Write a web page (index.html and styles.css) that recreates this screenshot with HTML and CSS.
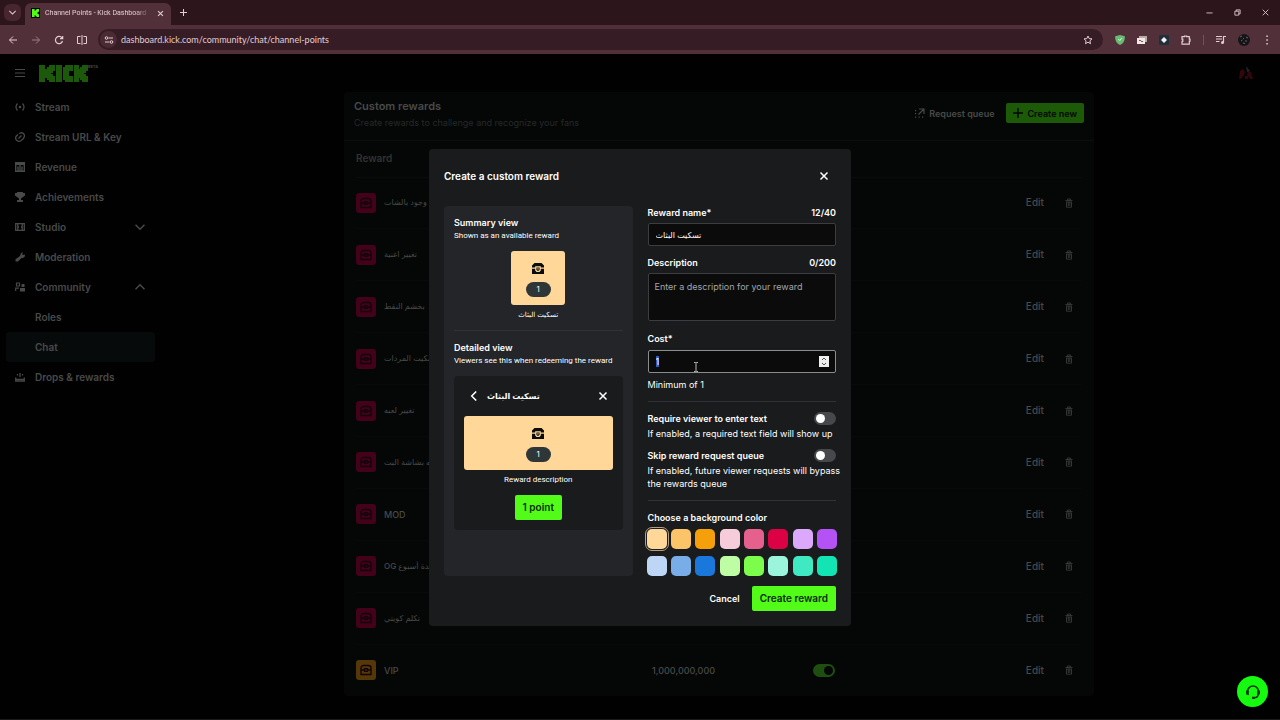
FILE: index.html
```html
<!DOCTYPE html>
<html lang="en">
    <head>
        <meta charset="UTF-8" />
        <meta name="viewport" content="width=device-width, initial-scale=1.0" />
        <title>Channel Points - Kick Dashboard</title>
        <link rel="stylesheet" href="styles.css">
    </head>
    <body>
        <!-- Shared icons -->
        <svg class="sprite" aria-hidden="true">
            <symbol id="chest" viewBox="0 0 12 11">
                <path fill="currentColor" fill-rule="evenodd" d="M2.500 0h7L12 2.500V4.500H8.800V3.300H3.200v1.200H0V2.500zM0 5.700h3.200v1.800L4.600 9h2.800l1.400-1.500V5.700H12V11H0zM4.400 4.400h3.200v2.400L6.800 7.800H5.200l-.8-1zM5.400 5.300v1.300h1.200V5.300z" />
            </symbol>
            <symbol id="chest-dim" viewBox="0 0 12 12">
                <path fill="none" stroke="currentColor" stroke-width="1.400" d="M1 10.500V4a2.500 2.500 0 0 1 2.500-2.500h5A2.500 2.500 0 0 1 11 4v6.500zM1 6h3.500M7.500 6H11M4.600 4.800h2.800v2.600H4.600z" />
            </symbol>
            <symbol id="trash" viewBox="0 0 10 10">
                <path fill="none" stroke="currentColor" d="M1.500 2.500h7M3.500 2V1h3v1M2.500 4v5.200h5V4M4.300 4v4M5.800 4v4M2 4h6" />
            </symbol>
            <symbol id="close" viewBox="0 0 10 10">
                <path fill="none" stroke="currentColor" stroke-width="1.500" d="M1.500 1.500l7 7M8.500 1.500l-7 7" />
            </symbol>
            <symbol id="chevron" viewBox="0 0 10 10">
                <path fill="none" stroke="currentColor" stroke-width="1.500" d="M0.500 2.800L5 7.300l4.500-4.500" />
            </symbol>
            <symbol id="kick-k" viewBox="0 0 8 9">
                <path fill="currentColor" d="M0 0h3v2h1V1h1V0h3v3H7v1H6v1h1v1h1v3H5V8H4V7H3v2H0z" />
            </symbol>
        </svg>

        <header class="browser">
            <div class="tab-strip">
                <button class="tab-search" aria-label="Search tabs">
                    <svg class="icon-small"><use href="#chevron" /></svg>
                </button>
                <div class="tab">
                    <span class="favicon"><svg viewBox="0 0 8 9"><use href="#kick-k" /></svg></span>
                    <span class="tab-title">Channel Points - Kick Dashboard</span>
                    <button aria-label="Close tab"><svg class="icon-small"><use href="#close" /></svg></button>
                </div>
                <button class="new-tab" aria-label="New tab">
                    <svg class="icon-small" viewBox="0 0 10 10"><path fill="none" stroke="currentColor" stroke-width="1.500" d="M5 0v10M0 5h10" /></svg>
                </button>
                <div class="window-buttons">
                    <button aria-label="Minimize"><svg class="icon-small" viewBox="0 0 8 8"><path fill="none" stroke="currentColor" d="M0.500 4.500h7" /></svg></button>
                    <button aria-label="Restore"><svg class="icon-small" viewBox="0 0 8 8"><path fill="none" stroke="currentColor" d="M1 2.500h4.500V7H1zM2.500 2.500V1H7v4.500H5.500" /></svg></button>
                    <button aria-label="Close window"><svg class="icon-small" viewBox="0 0 8 8"><path fill="none" stroke="currentColor" d="M0.800 0.800l6.400 6.400M7.200 0.800L0.800 7.200" /></svg></button>
                </div>
            </div>
            <div class="toolbar">
                <div class="nav-buttons">
                    <button aria-label="Back"><svg class="icon" viewBox="0 0 10 10"><path fill="none" stroke="currentColor" d="M9 5H1.500M5 1.500L1.500 5 5 8.500" /></svg></button>
                    <button class="disabled" aria-label="Forward"><svg class="icon" viewBox="0 0 10 10"><path fill="none" stroke="currentColor" d="M1 5h7.500M5 1.500L8.500 5 5 8.500" /></svg></button>
                    <button aria-label="Reload"><svg class="icon" viewBox="0 0 10 10"><path fill="none" stroke="currentColor" stroke-width="1.200" d="M8.500 6A3.600 3.600 0 1 1 8 3M8.700 1v2.700H6" /></svg></button>
                    <button aria-label="Split view"><svg class="icon" viewBox="0 0 10 10"><path fill="none" stroke="currentColor" d="M3.500 1.500h-3v7h3M5 0v10M6.500 1.500h3v7h-3" /></svg></button>
                </div>
                <div class="address">
                    <span class="site-info"><svg class="icon" viewBox="0 0 10 10"><path fill="none" stroke="currentColor" stroke-width="1.200" d="M4.500 3H9M1 7h4.500" /><circle cx="2.500" cy="3" r="1.300" fill="none" stroke="currentColor" /><circle cx="7.500" cy="7" r="1.300" fill="none" stroke="currentColor" /></svg></span>
                    <input type="text" aria-label="Address" value="dashboard.kick.com/community/chat/channel-points" />
                    <button aria-label="Bookmark"><svg class="icon" viewBox="0 0 10 10"><path fill="none" stroke="currentColor" d="M5 1l1.200 2.600 2.800.3L6.900 5.800l.6 2.900L5 7.200 2.500 8.700l.6-2.900L1 3.900l2.800-.3z" /></svg></button>
                </div>
                <div class="extensions">
                    <svg class="icon" viewBox="0 0 10 10"><path fill="#68bc71" d="M5 0l4.800 1.200c.2 4-1 7-4.800 8.800C1.200 8.200 0 5.200.2 1.200z" /><path fill="none" stroke="#e6f5e8" d="M3.300 4l1.500 1.500 2-2.500" /></svg>
                    <svg class="icon" viewBox="0 0 10 10"><path fill="#b8aaa8" d="M2 1h8v6H2z" /><path fill="#f0ebe8" d="M0 3h8v6H0z" /><path fill="#b8443c" d="M2 5h2v1H2zM4 6h2v1H4z" /></svg>
                    <svg class="icon" viewBox="0 0 10 10"><path fill="#20303a" d="M0 0h10v10H0z" /><path fill="#f4f4f4" d="M5 2l3 3-3 3-3-3z" /></svg>
                    <svg class="icon" viewBox="0 0 10 10"><path fill="none" stroke="currentColor" stroke-width="1.200" d="M1 1.700h2.600V1h2v.7H8.300v2.500H9v2h-.7v2.900H1V6.400h.8V4.200H1z" /></svg>
                    <span class="divider"></span>
                    <svg class="icon" viewBox="0 0 10 10"><path fill="none" stroke="currentColor" stroke-width="1.200" d="M0 1.500h6M0 4h6M0 6.500h3.500M7.500 7.500v-6H10" /><circle cx="6.500" cy="7.500" r="1.500" fill="currentColor" /></svg>
                    <svg class="profile" viewBox="0 0 12 12"><circle cx="6" cy="6" r="6" fill="#151517" /><path fill="none" stroke="#686268" d="M2 3l2-1M8 3l2 1M3 7l1.500-1M7 7h2M5 9l2 .5M5 4l1 1" /></svg>
                    <svg class="icon" viewBox="0 0 10 10"><path fill="currentColor" d="M4.300.5h1.500V2H4.300zM4.300 4.200h1.500v1.500H4.300zM4.300 8h1.500v1.500H4.300z" /></svg>
                </div>
            </div>
        </header>

        <div class="page">
            <div class="topbar">
                <button aria-label="Menu"><svg class="icon" viewBox="0 0 10 10"><path fill="none" stroke="currentColor" d="M0 1.500h10M0 5h10M0 8.500h10" /></svg></button>
                <a class="logo" href="#" aria-label="Kick">
                    <svg viewBox="0 0 49 17">
                        <path fill="currentColor" d="M0 0h6v4h2V2h2V0h6v6h-2v2h-2v1h2v2h2v6h-6v-2H8v-2H6v4H0zM17 0h6v17h-6zM26 0h8v6h-4v5h4v6h-8v-2h-2V2h2zM35 0h5v4h1V2h2V0h6v6h-2v2h-2v1h2v2h2v6h-6v-2h-2v-2h-1v4h-5z" />
                    </svg>
                </a>
                <span class="beta">BETA</span>
                <svg class="avatar" viewBox="0 0 16 16"><path fill="#32060d" d="M2 6l3-2 2 3-1 3-3 4H1zM10 6l3 1 2 7h-3l-3-4zM7 11h3v3H7z" /><path fill="#252525" d="M8 1l4 5-3 1z" /></svg>
            </div>

            <nav class="sidebar">
                <a href="#"><svg class="icon" viewBox="0 0 10 10"><path fill="none" stroke="currentColor" stroke-width="1.200" d="M2.500 1.500Q-.5 5 2.500 8.500M7.500 1.500q3 3.500 0 7" /><circle cx="5" cy="5" r="1.300" fill="currentColor" /></svg>Stream</a>
                <a href="#"><svg class="icon" viewBox="0 0 10 10"><path fill="none" stroke="currentColor" stroke-width="1.300" d="M4 1.500L6 .8a3 3 0 0 1 3 4.500L8 7 5.500 9a3.400 3.400 0 0 1-4.500-4.500L3 2.500M3.500 6.500l3-3" /></svg>Stream URL &amp; Key</a>
                <a href="#"><svg class="icon" viewBox="0 0 10 10"><path fill="none" stroke="currentColor" stroke-width="1.400" d="M.7.700h8.600v8.600H.7zM3 9V4.500M5 9V3M7 9V4.500M1 2.200h8" /></svg>Revenue</a>
                <a href="#"><svg class="icon" viewBox="0 0 10 10"><path fill="currentColor" d="M2 0h6v1h2v2.500L8 5 6 6.500V8h2v2H2V8h2V6.500L2 5 0 3.500V1h2z" /></svg>Achievements</a>
                <a href="#"><svg class="icon" viewBox="0 0 10 10"><path fill="none" stroke="currentColor" stroke-width="1.300" d="M.7 1.700h8.600v6.600H.7zM2.800 2v6M7.200 2v6M2.800 5h1.200M6 5h1.200" /></svg>Studio<svg class="icon arrow"><use href="#chevron" /></svg></a>
                <a href="#"><svg class="icon" viewBox="0 0 10 10"><path fill="currentColor" d="M6 1l2-.7-.8 2 .8.8 2-.6c0 3-1.500 3.800-3.500 3.500L3 9.500H.5V7.200L5 4z" /></svg>Moderation</a>
                <a href="#"><svg class="icon" viewBox="0 0 10 10"><path fill="none" stroke="currentColor" stroke-width="1.200" d="M1.500 1h3v3h-3zM.7 9V6.200H4" /><path fill="currentColor" d="M6.500 2h3v3h-3zM5 6h5v3.500H5z" /></svg>Community<svg class="icon arrow up"><use href="#chevron" /></svg></a>
                <a class="child" href="#">Roles</a>
                <a class="child active" href="#">Chat</a>
                <a href="#"><svg class="icon" viewBox="0 0 10 10"><path fill="none" stroke="currentColor" stroke-width="1.300" d="M5 1v4M2.500 2v1.500M7.500 2v1.500M.7 5.500v3.600h8.600V5.500M1 7.500h8" /></svg>Drops &amp; rewards</a>
            </nav>

            <main class="content">
                <section class="card">
                    <div class="card-header">
                        <div>
                            <h1>Custom rewards</h1>
                            <p>Create rewards to challenge and recognize your fans</p>
                        </div>
                        <button class="request-queue"><svg class="icon" viewBox="0 0 10 10"><path fill="none" stroke="currentColor" stroke-width="1.200" d="M4 1h5v5M9 1L3.500 6.500" /><path fill="currentColor" d="M0 2h1.200v1.200H0zM0 5h1.200v1.200H0zM0 8.500h1.200v1.200H0zM3.500 8.500h1.200v1.200H3.500zM7 8.500h1.200v1.200H7z" /></svg>Request queue</button>
                        <button class="create-new"><svg class="icon" viewBox="0 0 10 10"><path fill="none" stroke="currentColor" stroke-width="1.400" d="M5 0v10M0 5h10" /></svg>Create new</button>
                    </div>
                    <table>
                        <thead>
                            <tr><th class="col-reward">Reward</th><th class="col-cost"></th><th></th><th class="col-actions"></th></tr>
                        </thead>
                        <tbody>
                            <tr>
                                <td><div class="reward"><span class="badge"><svg><use href="#chest-dim" /></svg></span>اثبات وجود بالشات</div></td><td></td><td></td>
                                <td><div class="actions"><button>Edit</button><button aria-label="Delete"><svg class="icon"><use href="#trash" /></svg></button></div></td>
                            </tr>
                            <tr>
                                <td><div class="reward"><span class="badge"><svg><use href="#chest-dim" /></svg></span>تغيير اغنية</div></td><td></td><td></td>
                                <td><div class="actions"><button>Edit</button><button aria-label="Delete"><svg class="icon"><use href="#trash" /></svg></button></div></td>
                            </tr>
                            <tr>
                                <td><div class="reward"><span class="badge"><svg><use href="#chest-dim" /></svg></span>بخشم النقط</div></td><td></td><td></td>
                                <td><div class="actions"><button>Edit</button><button aria-label="Delete"><svg class="icon"><use href="#trash" /></svg></button></div></td>
                            </tr>
                            <tr>
                                <td><div class="reward"><span class="badge"><svg><use href="#chest-dim" /></svg></span>تسكيت المردات</div></td><td></td><td></td>
                                <td><div class="actions"><button>Edit</button><button aria-label="Delete"><svg class="icon"><use href="#trash" /></svg></button></div></td>
                            </tr>
                            <tr>
                                <td><div class="reward"><span class="badge"><svg><use href="#chest-dim" /></svg></span>تغيير لعبه</div></td><td></td><td></td>
                                <td><div class="actions"><button>Edit</button><button aria-label="Delete"><svg class="icon"><use href="#trash" /></svg></button></div></td>
                            </tr>
                            <tr>
                                <td><div class="reward"><span class="badge"><svg><use href="#chest-dim" /></svg></span>لحظه بشاشة البث</div></td><td></td><td></td>
                                <td><div class="actions"><button>Edit</button><button aria-label="Delete"><svg class="icon"><use href="#trash" /></svg></button></div></td>
                            </tr>
                            <tr>
                                <td><div class="reward latin"><span class="badge"><svg><use href="#chest-dim" /></svg></span>MOD</div></td><td></td><td></td>
                                <td><div class="actions"><button>Edit</button><button aria-label="Delete"><svg class="icon"><use href="#trash" /></svg></button></div></td>
                            </tr>
                            <tr>
                                <td><div class="reward"><span class="badge"><svg><use href="#chest-dim" /></svg></span>OG لمدة أسبوع</div></td><td></td><td></td>
                                <td><div class="actions"><button>Edit</button><button aria-label="Delete"><svg class="icon"><use href="#trash" /></svg></button></div></td>
                            </tr>
                            <tr>
                                <td><div class="reward"><span class="badge"><svg><use href="#chest-dim" /></svg></span>تكلم كويتي</div></td><td></td><td></td>
                                <td><div class="actions"><button>Edit</button><button aria-label="Delete"><svg class="icon"><use href="#trash" /></svg></button></div></td>
                            </tr>
                            <tr>
                                <td><div class="reward latin"><span class="badge gold"><svg><use href="#chest-dim" /></svg></span>VIP</div></td>
                                <td class="amount">1,000,000,000</td>
                                <td><input class="toggle dim" type="checkbox" aria-label="VIP enabled" checked /></td>
                                <td><div class="actions"><button>Edit</button><button aria-label="Delete"><svg class="icon"><use href="#trash" /></svg></button></div></td>
                            </tr>
                        </tbody>
                    </table>
                </section>
            </main>

            <div class="overlay">
                <form class="modal">
                    <div class="modal-header">
                        <h2>Create a custom reward</h2>
                        <button type="button" aria-label="Close"><svg class="icon"><use href="#close" /></svg></button>
                    </div>
                    <div class="modal-body">
                        <div class="preview">
                            <h3>Summary view</h3>
                            <p>Shown as an available reward</p>
                            <div class="tile summary-tile">
                                <svg class="chest"><use href="#chest" /></svg>
                                <span class="pill">1</span>
                            </div>
                            <div class="tile-name">تسكيت البثاث</div>
                            <hr />
                            <h3>Detailed view</h3>
                            <p>Viewers see this when redeeming the reward</p>
                            <div class="detail">
                                <div class="detail-header">
                                    <button type="button" aria-label="Back"><svg class="icon back"><use href="#chevron" /></svg></button>
                                    <strong>تسكيت البثاث</strong>
                                    <button type="button" aria-label="Close preview"><svg class="icon"><use href="#close" /></svg></button>
                                </div>
                                <div class="tile">
                                    <svg class="chest"><use href="#chest" /></svg>
                                    <span class="pill">1</span>
                                </div>
                                <div class="detail-text">Reward description</div>
                                <button type="button" class="primary">1 point</button>
                            </div>
                        </div>

                        <div class="fields">
                            <div class="label-row"><label for="rewardName">Reward name*</label><span>12/40</span></div>
                            <input class="field arabic" type="text" id="rewardName" value="تسكيت البثاث" />
                            <div class="label-row"><label for="description">Description</label><span>0/200</span></div>
                            <textarea class="field" id="description" placeholder="Enter a description for your reward"></textarea>
                            <div class="label-row"><label for="cost">Cost*</label></div>
                            <div class="cost">
                                <input class="field" type="number" id="cost" min="1" value="1" autofocus />
                                <svg class="spinner" viewBox="0 0 10 11"><path fill="#efefef" d="M0 0h10v11H0z" /><path fill="none" stroke="#555" d="M3 4l2-2 2 2M3 7l2 2 2-2" /></svg>
                                <svg class="cursor" viewBox="0 0 6 10"><path fill="none" stroke="#bbb" d="M1 .5h1.500l.5.500.5-.5H5M3 1v8M1 9.500h1.500L3 9l.5.500H5" /></svg>
                            </div>
                            <p>Minimum of 1</p>
                            <hr />
                            <div class="switch-row">
                                <label for="requireText">Require viewer to enter text</label>
                                <input class="toggle" type="checkbox" id="requireText" />
                            </div>
                            <p>If enabled, a required text field will show up</p>
                            <div class="switch-row second">
                                <label for="skipQueue">Skip reward request queue</label>
                                <input class="toggle" type="checkbox" id="skipQueue" />
                            </div>
                            <p>If enabled, future viewer requests will bypass the rewards queue</p>
                            <hr />
                            <fieldset>
                                <legend>Choose a background color</legend>
                                <div class="swatches">
                                    <input type="radio" name="color" class="peach" aria-label="Peach" checked />
                                    <input type="radio" name="color" class="apricot" aria-label="Apricot" />
                                    <input type="radio" name="color" class="orange" aria-label="Orange" />
                                    <input type="radio" name="color" class="blush" aria-label="Blush" />
                                    <input type="radio" name="color" class="pink" aria-label="Pink" />
                                    <input type="radio" name="color" class="crimson" aria-label="Crimson" />
                                    <input type="radio" name="color" class="lilac" aria-label="Lilac" />
                                    <input type="radio" name="color" class="purple" aria-label="Purple" />
                                    <input type="radio" name="color" class="ice" aria-label="Ice" />
                                    <input type="radio" name="color" class="sky" aria-label="Sky" />
                                    <input type="radio" name="color" class="blue" aria-label="Blue" />
                                    <input type="radio" name="color" class="lime" aria-label="Lime" />
                                    <input type="radio" name="color" class="green" aria-label="Green" />
                                    <input type="radio" name="color" class="mint" aria-label="Mint" />
                                    <input type="radio" name="color" class="aqua" aria-label="Aqua" />
                                    <input type="radio" name="color" class="teal" aria-label="Teal" />
                                </div>
                            </fieldset>
                        </div>
                    </div>
                    <div class="modal-footer">
                        <button type="button" class="cancel">Cancel</button>
                        <button type="submit" class="primary">Create reward</button>
                    </div>
                </form>
            </div>

            <button class="support" aria-label="Support">
                <svg viewBox="0 0 16 16"><path fill="none" stroke="currentColor" stroke-width="1.500" d="M2.500 9V7.500a5.500 5.500 0 0 1 11 0V9c0 3-1.500 4.800-4.500 4.800" /><path fill="currentColor" d="M1 6.500h2.800v4.800C2 11.300 1 10.300 1 9zM15 6.500h-2.800v4.800c1.800 0 2.800-1 2.800-2.300zM7 12.800h3V15H7z" /></svg>
            </button>
        </div>

        <script>
            // Start with the cost highlighted so it can be typed over
            const cost = document.getElementById("cost");
            cost.focus();
            cost.select();
        </script>
    </body>
</html>
```

FILE: styles.css
```css
* {
    box-sizing: border-box;
}
body {
    display: flex;
    flex-direction: column;
    min-height: 100vh;
    margin: 0;
    background-color: #010101;
    color: #fff;
    font-family: Inter, "DejaVu Sans", sans-serif;
    font-size: 9px;
    line-height: 13px;
}
h1,
h2,
h3,
p {
    margin: 0;
}
button,
input,
textarea {
    font: inherit;
    color: inherit;
}
button {
    display: flex;
    align-items: center;
    justify-content: center;
    padding: 0;
    border: none;
    background: none;
    cursor: pointer;
}
a {
    color: inherit;
    text-decoration: none;
}
hr {
    height: 1px;
    margin: 0;
    border: none;
    background-color: #303235;
}
svg {
    display: block;
    flex: none;
}
.sprite {
    position: absolute;
    width: 0;
    height: 0;
}
.icon {
    width: 10px;
    height: 10px;
}
.icon-small {
    width: 7px;
    height: 7px;
}

/* Browser window */
.browser {
    color: #e3ccd2;
    font-family: Lato, sans-serif;
}
.tab-strip {
    display: flex;
    align-items: center;
    height: 25px;
    padding-left: 4px;
    background-color: #2d151c;
}
.tab-search {
    width: 17px;
    height: 17px;
    border-radius: 6px;
    background-color: #47262f;
}
.tab {
    display: flex;
    align-items: center;
    align-self: flex-end;
    width: 146px;
    height: 22px;
    margin-left: 4px;
    padding: 0 7px 2px 6px;
    border-radius: 6px 6px 0 0;
    background-color: #52303a;
}
.favicon {
    display: flex;
    align-items: center;
    justify-content: center;
    width: 9px;
    height: 10px;
    background-color: #000;
    color: #53fc18;
}
.favicon svg {
    width: 7px;
    height: 8px;
}
.tab-title {
    flex: 1;
    overflow: hidden;
    margin: 0 6px 0 5px;
    font-family: Roboto, sans-serif;
    font-size: 7px;
    white-space: nowrap;
    mask-image: linear-gradient(to right, #000 85%, transparent);
}
.new-tab {
    margin-left: 5px;
    padding: 4px;
}
.window-buttons {
    display: flex;
    gap: 21px;
    margin-left: auto;
    padding-right: 11px;
}
.toolbar {
    display: flex;
    align-items: center;
    height: 29px;
    background-color: #52303a;
}
.nav-buttons {
    display: flex;
    gap: 13px;
    padding: 0 11px 0 8px;
}
.disabled {
    opacity: 0.5;
}
.address {
    display: flex;
    flex: 1;
    align-items: center;
    height: 21px;
    padding: 0 10px 0 2px;
    border-radius: 11px;
    background-color: #361d25;
}
.site-info {
    display: flex;
    align-items: center;
    justify-content: center;
    width: 17px;
    height: 17px;
    border-radius: 9px;
    background-color: #4a2b34;
}
.address input {
    flex: 1;
    min-width: 0;
    margin-left: 3px;
    padding: 0 1px;
    border: none;
    outline: none;
    background: none;
}
.extensions {
    display: flex;
    align-items: center;
    gap: 12px;
    padding: 0 8px 0 12px;
}
.extensions .divider {
    width: 1px;
    height: 10px;
    background-color: #75505b;
}
.profile {
    width: 12px;
    height: 12px;
}

/* Dashboard */
.page {
    position: relative;
    display: grid;
    flex: 1;
    grid-template-columns: 158px 1fr;
    grid-template-rows: 38px 1fr;
    border-bottom: 1px solid #1a1a1a;
    color: #484a49;
}
.topbar {
    display: flex;
    grid-column: 1 / 3;
    align-items: center;
    padding: 0 26px 0 15px;
}
.logo {
    margin-left: 14px;
    color: #1d590b;
}
.logo svg {
    width: 49px;
    height: 17px;
}
.beta {
    align-self: flex-start;
    margin-top: 6px;
    font-size: 4px;
    font-weight: 600;
}
.avatar {
    width: 16px;
    height: 16px;
    margin-left: auto;
}
.sidebar a {
    display: flex;
    align-items: center;
    gap: 10px;
    height: 30px;
    margin: 0 3px 0 6px;
    padding: 0 10px 0 9px;
    border-radius: 3px;
    font-size: 10px;
    font-weight: 600;
}
.sidebar .child {
    padding-left: 29px;
}
.sidebar .active {
    background-color: #070a0a;
}
.arrow {
    margin-left: auto;
}
.up {
    transform: rotate(180deg);
}
.content {
    padding: 0 24px;
}
.card {
    max-width: 750px;
    margin: 0 auto;
    border-radius: 4px;
    background-color: #040706;
}
.card-header {
    display: flex;
    align-items: center;
    gap: 12px;
    height: 49px;
    padding: 0 10px 6px;
    border-bottom: 1px solid #0a0e0d;
}
.card-header div {
    margin-right: auto;
    padding-top: 2px;
}
.card-header h1 {
    font-size: 11px;
    font-weight: 600;
    line-height: 18px;
}
.card-header p {
    color: #262928;
    line-height: 16px;
}
.request-queue {
    gap: 4px;
    font-weight: 600;
}
.create-new {
    gap: 4px;
    height: 20px;
    padding: 0 7px;
    border-radius: 2px;
    background-color: #1c5a08;
    color: #020802;
    font-weight: 600;
}
.card table {
    width: calc(100% - 24px);
    height: 555px;
    margin: 0 12px;
    border-collapse: collapse;
    table-layout: fixed;
}
.card th {
    height: 36px;
    padding: 0;
    border-bottom: 1px solid #090c0b;
    color: #313433;
    font-size: 10px;
    font-weight: 600;
    text-align: left;
}
.card td {
    height: 51px;
    padding: 0;
    border-bottom: 1px solid #070a09;
    font-size: 10px;
    font-weight: 500;
}
.card .amount {
    font-size: 9px;
}
.card tr:last-child td {
    border-bottom: none;
}
.col-reward {
    width: 296px;
}
.col-cost {
    width: 161px;
}
.col-actions {
    width: 80px;
}
.reward {
    display: flex;
    align-items: center;
    gap: 8px;
    font-size: 8px;
    white-space: nowrap;
}
.reward.latin {
    font-size: 9px;
}
.badge {
    display: flex;
    align-items: center;
    justify-content: center;
    width: 20px;
    height: 20px;
    border-radius: 3px;
    background-color: #43021a;
    color: #14030a;
}
.badge svg {
    width: 14px;
    height: 12px;
}
.badge.gold {
    background-color: #553807;
}
.actions {
    display: flex;
    justify-content: flex-end;
    gap: 12px;
}
.actions button {
    padding: 5px 8px;
}
.actions button + button {
    padding: 5px 8px 5px 0;
    color: #343635;
}

/* Switches */
.toggle {
    display: flex;
    align-items: center;
    flex: none;
    width: 22px;
    height: 13px;
    margin: 0;
    padding: 0 2px;
    border-radius: 7px;
    background-color: #46484b;
    appearance: none;
}
.toggle::before {
    width: 9px;
    height: 9px;
    border-radius: 5px;
    background-color: #fff;
    content: "";
}
.toggle.dim {
    background-color: #1f4f10;
}
.toggle:checked::before {
    margin-left: auto;
}
.toggle.dim::before {
    background-color: #050706;
}

/* New reward dialog */
.overlay {
    position: absolute;
    inset: 0;
    display: flex;
    align-items: center;
    justify-content: center;
    padding-top: 2px;
}
.modal {
    width: 422px;
    padding: 15px;
    border-radius: 4px;
    background-color: #191b1c;
    color: #fff;
}
.modal-header {
    display: flex;
    align-items: center;
    justify-content: space-between;
    height: 24px;
    margin-bottom: 18px;
    padding-right: 7px;
}
.modal h2 {
    font-size: 10px;
    font-weight: 600;
}
.modal h3 {
    font-size: 9px;
    font-weight: 600;
}
.modal-body {
    display: grid;
    grid-template-columns: 1fr 1fr;
    gap: 15px;
}
.preview {
    padding: 10px;
    border-radius: 4px;
    background-color: #232528;
}
.preview p {
    margin-bottom: 9px;
    font-family: Roboto, sans-serif;
    font-size: 8px;
}
.tile {
    display: flex;
    flex-direction: column;
    align-items: center;
    justify-content: center;
    gap: 8px;
    height: 54px;
    padding-top: 3px;
    border-radius: 3px;
    background-color: #ffd899;
}
.summary-tile {
    width: 54px;
    margin: 0 auto;
}
.chest {
    width: 12px;
    height: 11px;
    color: #0b0b0b;
}
.pill {
    width: 25px;
    border-radius: 8px;
    background-color: #2f3638;
    font-size: 8px;
    line-height: 15px;
    text-align: center;
}
.tile-name {
    margin: 3px 0 9px;
    font-size: 7px;
    text-align: center;
}
.preview hr {
    margin-bottom: 10px;
}
.detail {
    padding: 10px;
    border-radius: 4px;
    background-color: #191b1c;
}
.detail-header {
    display: flex;
    align-items: center;
    gap: 8px;
    height: 20px;
    margin-bottom: 10px;
    padding: 0 5px;
}
.detail-header strong {
    flex: 1;
    font-size: 8px;
}
.back {
    transform: rotate(90deg);
}
.detail-text {
    margin: 3px 0 9px;
    font-family: Roboto, sans-serif;
    font-size: 8px;
    text-align: center;
}
.primary {
    height: 25px;
    padding: 0 8px;
    border-radius: 2px;
    background-color: #53fc18;
    color: #0b2a05;
    font-size: 10px;
    font-weight: 600;
}
.detail .primary {
    margin: 0 auto;
}
.label-row,
.switch-row {
    display: flex;
    align-items: center;
    justify-content: space-between;
    font-weight: 600;
}
.label-row {
    margin-bottom: 4px;
}
.field {
    display: block;
    width: 100%;
    height: 23px;
    margin: 0 0 10px;
    padding: 0 7px;
    border: 1px solid #3b3d40;
    border-radius: 2px;
    outline: none;
    background-color: #0b0b0c;
}
.field:focus {
    border-color: #8a8c8e;
}
.field.arabic {
    font-size: 8px;
}
textarea.field {
    height: 48px;
    margin-bottom: 11px;
    padding: 6px;
    resize: none;
}
.field::placeholder {
    color: #a3a5a6;
}
.field::selection {
    background-color: #2c5fc4;
    color: #fff;
}
.fields p {
    margin-right: -8px;
}
.cost {
    position: relative;
    margin-top: 5px;
}
.cost .field {
    margin-bottom: 5px;
    appearance: textfield;
}
.cost .field::-webkit-inner-spin-button {
    display: none;
}
.spinner {
    position: absolute;
    top: 6px;
    right: 7px;
    width: 10px;
    height: 11px;
}
.cursor {
    position: absolute;
    top: 12px;
    left: 45px;
    width: 6px;
    height: 10px;
}
.fields hr {
    margin: 10px 0;
}
.switch-row {
    margin-bottom: 2px;
}
.switch-row.second {
    margin-top: 9px;
}
fieldset {
    margin: 0;
    padding: 0;
    border: none;
}
legend {
    margin-bottom: 5px;
    padding: 0;
    font-weight: 600;
}
.swatches {
    display: grid;
    grid-template-columns: repeat(8, 20px);
    justify-content: space-between;
    row-gap: 7px;
    margin: 0 -1px;
}
.swatches input {
    width: 20px;
    height: 20px;
    margin: 0;
    border-radius: 5px;
    appearance: none;
}
.swatches input:checked {
    outline: 1px solid #b0a087;
    outline-offset: 1px;
}
.peach { background-color: #ffd899; }
.apricot { background-color: #fbc468; }
.orange { background-color: #f5a00a; }
.blush { background-color: #f6ccdb; }
.pink { background-color: #e6608d; }
.crimson { background-color: #dc0044; }
.lilac { background-color: #dba8fb; }
.purple { background-color: #b552f5; }
.ice { background-color: #bed6f5; }
.sky { background-color: #78ade8; }
.blue { background-color: #1a78dc; }
.lime { background-color: #bffda4; }
.green { background-color: #7dfd4b; }
.mint { background-color: #9bf4dc; }
.aqua { background-color: #3fe9c1; }
.teal { background-color: #12e5b3; }
.modal-footer {
    display: flex;
    align-items: center;
    justify-content: flex-end;
    gap: 12px;
    margin-top: 10px;
}
.cancel {
    font-weight: 600;
}
.support {
    position: absolute;
    right: 12px;
    bottom: 12px;
    width: 31px;
    height: 31px;
    border-radius: 16px;
    background-color: #15fb0f;
    color: #063306;
}
.support svg {
    width: 16px;
    height: 16px;
}
```
